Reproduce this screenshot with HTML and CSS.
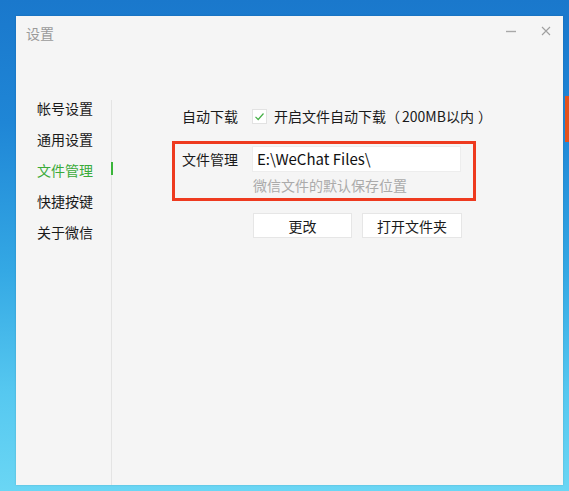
FILE: index.html
```html
<!DOCTYPE html>
<html lang="zh-CN">
<head>
<meta charset="utf-8">
<title>设置</title>
<link rel="stylesheet" href="styles.css">
</head>
<body>
<div class="desktop">
  <div class="desk-icon"></div>
  <div class="dialog">
    <div class="titlebar">
      <span class="title">设置</span>
      <div class="controls">
        <svg class="ctl" width="12" height="12" viewBox="0 0 12 12"><path d="M1 6.5h10" stroke="#a8a8a8" stroke-width="1.4"/></svg>
        <svg class="ctl" width="12" height="12" viewBox="0 0 12 12"><path d="M2 2l8 8M10 2l-8 8" stroke="#a0a0a0" stroke-width="1.1"/></svg>
      </div>
    </div>
    <div class="main">
      <ul class="menu">
        <li class="item">帐号设置</li>
        <li class="item">通用设置</li>
        <li class="item active">文件管理</li>
        <li class="item">快捷按键</li>
        <li class="item">关于微信</li>
      </ul>
      <div class="divider"></div>
      <div class="content">
        <div class="row">
          <span class="label">自动下载</span>
          <label class="check">
            <span class="box">
              <svg width="13" height="13" viewBox="0 0 13 13"><path d="M2.5 6.8l2.7 2.7 5.3-6" fill="none" stroke="#45b046" stroke-width="1.2"/></svg>
            </span>
            <span class="check-text">开启文件自动下载<span class="paren open">（</span>200MB以内<span class="paren close">）</span></span>
          </label>
        </div>
        <div class="highlight">
          <div class="row path-row">
            <span class="label">文件管理</span>
            <div class="field">
              <div class="input">E:\WeChat Files\</div>
              <div class="hint">微信文件的默认保存位置</div>
            </div>
          </div>
        </div>
        <div class="buttons">
          <button class="btn">更改</button>
          <button class="btn wide">打开文件夹</button>
        </div>
      </div>
    </div>
  </div>
</div>
</body>
</html>
```
FILE: styles.css
```css
* { box-sizing: border-box; }
html, body { margin: 0; padding: 0; }
body {
  width: 569px;
  height: 491px;
  overflow: hidden;
  font-family: "Noto Sans CJK SC", "Noto Sans", sans-serif;
  font-size: 14px;
  color: #1a1a1a;
}
.desktop {
  position: relative;
  width: 569px;
  height: 491px;
  padding: 16px 0 0 16px;
  background: linear-gradient(180deg, #1a78cc 0%, #1f86d6 25%, #34a8e4 55%, #56c8f0 80%, #6ad6f4 100%);
}
.desk-icon {
  position: absolute;
  left: 565px;
  top: 96px;
  width: 8px;
  height: 46px;
  background: #e2521e;
}
.dialog {
  position: relative;
  width: 547px;
  height: 469px;
  background: #f5f5f5;
  display: flex;
  flex-direction: column;
  box-shadow: 0 0 2px rgba(0,0,0,0.15);
}
.titlebar {
  height: 34px;
  display: flex;
  align-items: center;
  justify-content: space-between;
  padding: 0 11px 0 10px;
}
.title {
  color: #9a9a9a;
  font-size: 14px;
}
.controls {
  display: flex;
  gap: 23px;
  align-items: center;
  margin-top: -4px;
}
.main {
  margin-top: 43px;
  flex: 1;
  display: flex;
}
.menu {
  list-style: none;
  margin: 0;
  padding: 0;
  width: 95px;
}
.item {
  position: relative;
  height: 31px;
  line-height: 31px;
  padding-left: 21px;
  font-size: 14px;
  color: #1a1a1a;
}
.item.active { color: #3aab3a; }
.item.active::after {
  content: "";
  position: absolute;
  right: -2px;
  top: 7px;
  width: 2px;
  height: 13px;
  background: #3ab53a;
}
.divider {
  width: 1px;
  margin-top: 7px;
  background: #e4e4e4;
}
.content {
  padding: 13px 0 0 60px;
  display: flex;
  flex-direction: column;
}
.row {
  display: flex;
  align-items: center;
  padding-left: 10px;
}
.label {
  width: 70px;
  flex: none;
}
.check {
  display: flex;
  align-items: center;
  gap: 7px;
}
.paren {
  display: inline-block;
  width: 16px;
}
.paren.open { text-align: right; padding-right: 2px; }
.paren.close { text-align: left; padding-left: 4px; }
.box {
  width: 15px;
  height: 15px;
  background: #fff;
  border: 1px solid #e2e2e2;
  display: flex;
  align-items: center;
  justify-content: center;
}
.highlight {
  margin-top: 15px;
  width: 304px;
  height: 60px;
  border: 3px solid #ee3a1f;
  padding-top: 2px;
}
.path-row {
  padding-left: 7px;
  align-items: flex-start;
}
.path-row .label { line-height: 26px; }
.field {
  display: flex;
  flex-direction: column;
}
.input {
  width: 209px;
  height: 26px;
  background: #fff;
  border: 1px solid #ededed;
  font-size: 15px;
  line-height: 24px;
  padding-left: 4px;
  color: #111;
}
.hint {
  margin-top: 3px;
  padding-left: 1px;
  color: #ababab;
  font-size: 14px;
  line-height: 20px;
}
.buttons {
  margin-top: 12px;
  margin-left: 81px;
  display: flex;
  gap: 10px;
}
.btn {
  width: 99px;
  height: 25px;
  background: #fff;
  border: 1px solid #e6e6e6;
  font-family: inherit;
  font-size: 14px;
  color: #1a1a1a;
  padding: 0;
}
.btn.wide { width: 100px; }
```
